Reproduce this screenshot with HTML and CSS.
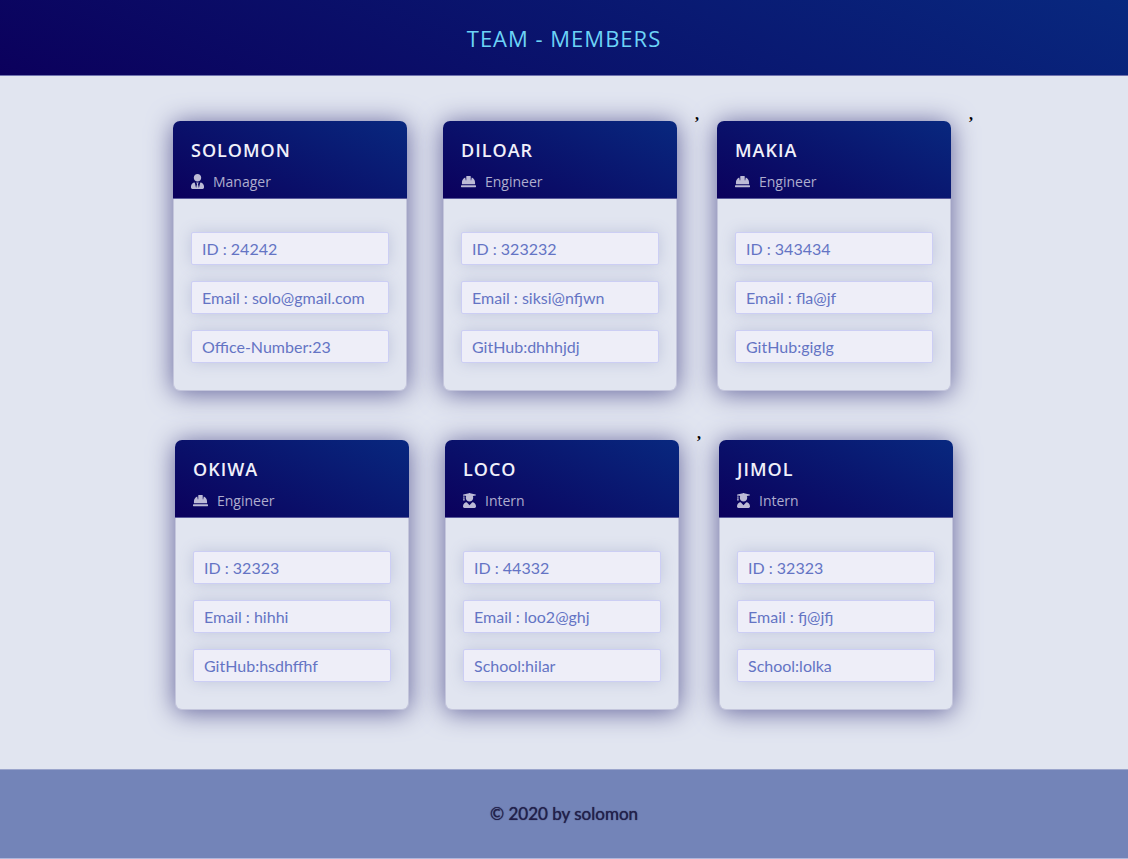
FILE: index.html
```html
<!DOCTYPE html>
<html lang="en">
<head>
<meta charset="utf-8">
<meta name="viewport" content="width=device-width, initial-scale=1">
<title>Team - Members</title>
<link rel="stylesheet" href="styles.css">
</head>
<body>
<svg class="sprite" aria-hidden="true">
  <symbol id="tie" viewBox="0 0 448 512"><path d="M224 256c70.700 0 128-57.300 128-128S294.700 0 224 0 96 57.300 96 128s57.300 128 128 128zm95.800 32.600L272 480l-32-136 32-56h-96l32 56-32 136-47.800-191.400C56.900 292 0 350.300 0 422.400V464c0 26.500 21.500 48 48 48h352c26.500 0 48-21.500 48-48v-41.600c0-72.100-56.900-130.400-128.200-133.800z"/></symbol>
  <symbol id="hat" viewBox="0 0 512 512"><path d="M480 352v-64c0-80-45-146-112-170l-22 100-14-4V80a16 16 0 0 0-16-16H196a16 16 0 0 0-16 16v134l-14 4-22-100C77 142 32 208 32 288v64zm16 32H16a16 16 0 0 0-16 16v32a16 16 0 0 0 16 16h480a16 16 0 0 0 16-16v-32a16 16 0 0 0-16-16z"/></symbol>
  <symbol id="graduate" viewBox="0 0 448 512"><path d="M319.400 320.600L224 416l-95.400-95.400C57.100 323.700 0 382.200 0 454.400v9.600c0 26.500 21.500 48 48 48h352c26.500 0 48-21.500 48-48v-9.600c0-72.200-57.100-130.700-128.600-133.800zM13.600 79.800l6.400 1.500v58.400c-7 4.200-12 11.500-12 20.300 0 8.400 4.600 15.400 11.100 19.700L3.500 242c-1.700 6.900 2.100 14 7.600 14h41.800c5.500 0 9.300-7.100 7.600-14l-15.600-62.300C51.400 175.400 56 168.400 56 160c0-8.800-5-16.100-12-20.300V87.100l66 15.900c-8.600 17.200-14 36.400-14 57 0 70.700 57.300 128 128 128s128-57.300 128-128c0-20.600-5.300-39.800-14-57l96.300-23.200c18.200-4.400 18.200-27.100 0-31.500l-190.400-46c-13-3.100-26.700-3.100-39.700 0L13.600 48.200c-18.100 4.400-18.100 27.200 0 31.600z"/></symbol>
</svg>

<header class="top"><h1 class="title">TEAM - MEMBERS</h1></header>

<main class="team">
  <div class="row">
    <article class="card">
      <div class="card-head">
        <h2 class="name">SOLOMON</h2>
        <p class="role"><svg class="icon icon-narrow"><use href="#tie"/></svg>Manager</p>
      </div>
      <ul class="facts"><li>ID : 24242</li><li>Email : solo@gmail.com</li><li>Office-Number:23</li></ul>
    </article>
    <article class="card">
      <div class="card-head">
        <h2 class="name">DILOAR</h2>
        <p class="role"><svg class="icon"><use href="#hat"/></svg>Engineer</p>
      </div>
      <ul class="facts"><li>ID : 323232</li><li>Email : siksi@nfjwn</li><li>GitHub:dhhhjdj</li></ul>
    </article>
    <span class="comma">,</span>
    <article class="card">
      <div class="card-head">
        <h2 class="name">MAKIA</h2>
        <p class="role"><svg class="icon"><use href="#hat"/></svg>Engineer</p>
      </div>
      <ul class="facts"><li>ID : 343434</li><li>Email : fla@jf</li><li>GitHub:giglg</li></ul>
    </article>
    <span class="comma">,</span>
  </div>
  <div class="row">
    <article class="card">
      <div class="card-head">
        <h2 class="name">OKIWA</h2>
        <p class="role"><svg class="icon"><use href="#hat"/></svg>Engineer</p>
      </div>
      <ul class="facts"><li>ID : 32323</li><li>Email : hihhi</li><li>GitHub:hsdhffhf</li></ul>
    </article>
    <article class="card">
      <div class="card-head">
        <h2 class="name">LOCO</h2>
        <p class="role"><svg class="icon icon-narrow"><use href="#graduate"/></svg>Intern</p>
      </div>
      <ul class="facts"><li>ID : 44332</li><li>Email : loo2@ghj</li><li>School:hilar</li></ul>
    </article>
    <span class="comma">,</span>
    <article class="card">
      <div class="card-head">
        <h2 class="name">JIMOL</h2>
        <p class="role"><svg class="icon icon-narrow"><use href="#graduate"/></svg>Intern</p>
      </div>
      <ul class="facts"><li>ID : 32323</li><li>Email : fj@jfj</li><li>School:lolka</li></ul>
    </article>
  </div>
</main>

<footer class="bottom"><p class="copy">© 2020 by solomon</p></footer>
</body>
</html>
```
FILE: styles.css
```css
* { box-sizing: border-box; }

body {
  margin: 0;
  background: #e1e5f0;
  font-family: Lato, sans-serif;
  font-size: 16px;
  color: #000;
}

.sprite { display: none; }

.top {
  padding: 23px 16px 21px;
  text-align: center;
  background: linear-gradient(25deg, #0b005c, #08287f);
  border-bottom: 1px solid #6f72ae;
}

.title {
  margin: 0;
  font-family: "Open Sans", sans-serif;
  font-size: 22px;
  font-weight: 500;
  line-height: 31px;
  letter-spacing: 1px;
  color: #6cd3f7;
}

.team {
  display: flex;
  flex-direction: column;
  gap: 49px;
  padding: 45px 0 59px;
}

.row {
  display: flex;
  flex-wrap: wrap;
  justify-content: center;
}

.comma {
  margin-top: -16px;
  font-family: "Liberation Serif", serif;
  font-weight: 700;
  line-height: 20px;
}

.card {
  width: 234px;
  margin: 0 18px;
  border: 1px solid #c4c6dc;
  border-top: 0;
  border-radius: 7px;
  background: #e1e5f0;
  box-shadow: 0 2px 26px #62629a;
}

.card-head {
  margin: 0 -1px;
  padding: 16px 18px 6px;
  border-bottom: 1px solid #5a5a9c;
  border-radius: 7px 7px 0 0;
  background: linear-gradient(25deg, #0b005c, #08287f);
  font-family: "Open Sans", sans-serif;
}

.name {
  margin: 0 0 8px;
  font-size: 18px;
  font-weight: 600;
  line-height: 26px;
  letter-spacing: 1px;
  color: #f0f0fa;
}

.role {
  display: flex;
  align-items: center;
  gap: 9px;
  margin: 0;
  font-size: 14px;
  font-weight: 500;
  line-height: 21px;
  color: #aeadce;
}

.icon {
  width: 15px;
  height: 15px;
  fill: #bdbbd6;
}

.icon-narrow { width: 13px; }

.facts {
  display: flex;
  flex-direction: column;
  gap: 16px;
  margin: 0;
  padding: 33px 17px 27px;
  list-style: none;
}

.facts li {
  padding: 5px 10px;
  border: 1px solid #cccef4;
  border-radius: 2px;
  background: #eeeef8;
  box-shadow: 0 0 15px #c0c6dc;
  line-height: 21px;
  color: #6474c4;
}

.bottom {
  padding: 32px 16px;
  text-align: center;
  background: #7384b8;
  border-top: 1px solid #9ba5cc;
  border-bottom: 1px solid #b0b8dc;
}

.copy {
  margin: 0;
  font-size: 17px;
  line-height: 24px;
  color: #22204a;
  text-shadow: 0 0 1px #22204a;
}
```
